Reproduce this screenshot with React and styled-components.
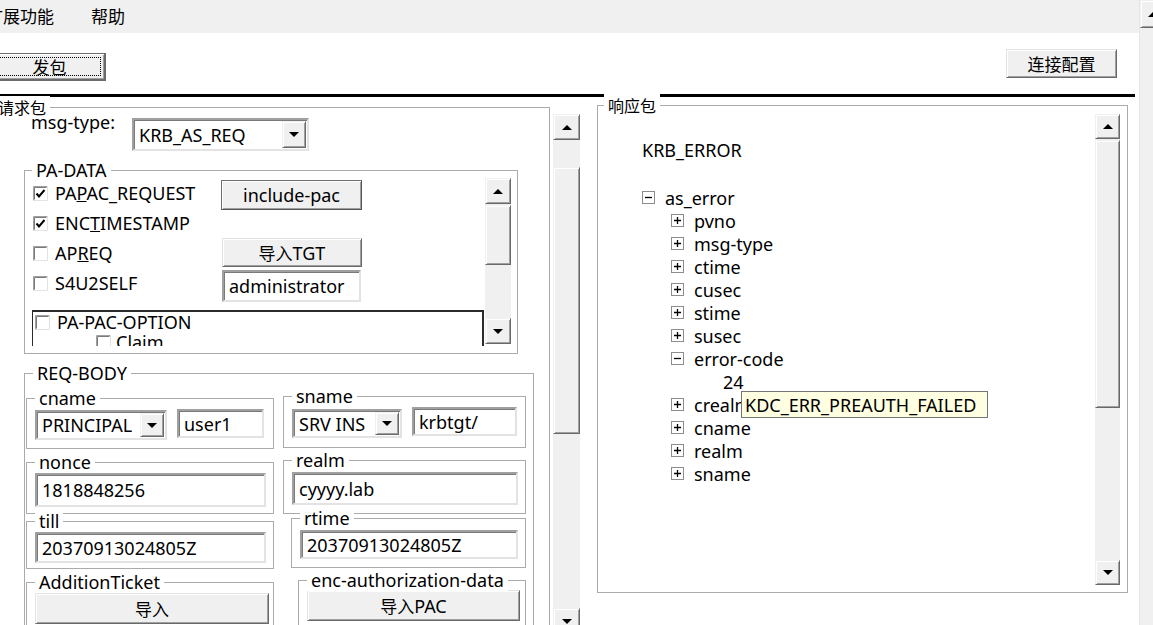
import React from "react";
import styled, { createGlobalStyle } from "styled-components";

const GlobalStyle = createGlobalStyle`
  html, body {
    margin: 0;
    padding: 0;
    background: #fff;
    overflow: hidden;
  }
  body {
    font-family: "Noto Sans", "Noto Sans CJK SC", sans-serif;
    font-size: 18px;
    color: #000;
  }
  * {
    box-sizing: border-box;
  }
`;

const Window = styled.div`
  width: 1153px;
  height: 625px;
  overflow: hidden;
  display: flex;
  background: #fff;
`;

const Main = styled.div`
  width: 1139px;
  flex: none;
  display: flex;
  flex-direction: column;
`;

const Cjk = styled.span`
  font-family: "Noto Sans CJK SC", sans-serif;
  font-size: ${(p) => p.$size || 17}px;
`;

/* menu + toolbar */
const MenuBar = styled.div`
  flex: none;
  height: 33px;
  background: #f0f0f0;
  display: flex;
  align-items: center;
  gap: 37px;
  padding-bottom: 2px;
`;

const MenuItem = styled.span`
  font-family: "Noto Sans CJK SC", sans-serif;
  font-size: 17px;
  &:first-child {
    margin-left: -14px;
  }
`;

const Toolbar = styled.div`
  flex: none;
  height: 61px;
  display: flex;
  justify-content: space-between;
  align-items: flex-start;
  padding-right: 22px;
`;

const Rule = styled.div`
  flex: none;
  height: 3px;
  background: #000;
  margin-right: 4px;
`;

const Btn = styled.button`
  flex: none;
  width: ${(p) => p.$w}px;
  height: ${(p) => p.$h}px;
  margin: ${(p) => p.$m || 0};
  padding: 0;
  font: inherit;
  color: #000;
  background: #f0f0f0;
  border: 1px solid;
  border-color: ${(p) =>
    p.$strong ? "#6e6e6e #555 #555 #6e6e6e" : "#e3e3e3 #696969 #696969 #e3e3e3"};
  box-shadow: inset 1px 1px 0 #fff, inset -1px -1px 0 #a0a0a0;
  display: flex;
  align-items: center;
  justify-content: center;
  line-height: 1;
  white-space: nowrap;
`;

const SendButton = styled(Btn)`
  border: 1px solid #6b6b6b;
  border-right-width: 2px;
  border-bottom-width: 2px;
  padding: 3px;
  align-items: stretch;
`;

const FocusRect = styled.span`
  flex: 1;
  border: 1px dotted #000;
  display: flex;
  align-items: center;
  justify-content: center;
`;

/* group boxes */
const Group = styled.div`
  position: relative;
  flex: none;
  width: ${(p) => p.$w}px;
  height: ${(p) => p.$h}px;
  margin: ${(p) => p.$m || 0};
  padding: ${(p) => p.$pad || 0};
  border: 1px solid #ababab;
  ${(p) => p.$open && "border-bottom: none;"}
  display: flex;
  flex-direction: ${(p) => (p.$row ? "row" : "column")};
  align-items: flex-start;
  gap: ${(p) => p.$gap || 0}px;
`;

const Legend = styled.span`
  position: absolute;
  top: -12px;
  left: ${(p) => (p.$left !== undefined ? p.$left : 8)}px;
  padding: 0 4px;
  background: #fff;
  line-height: 22px;
  white-space: nowrap;
`;

/* fields */
const Field = styled.div`
  flex: none;
  width: ${(p) => p.$w}px;
  height: ${(p) => p.$h}px;
  margin: ${(p) => p.$m || 0};
  background: #fff;
  border: 2px solid;
  border-color: #a0a0a0 #e3e3e3 #e3e3e3 #a0a0a0;
  box-shadow: inset 1px 1px 0 #7a7a7a;
  display: flex;
  align-items: center;
  padding-left: 5px;
  white-space: nowrap;
  overflow: hidden;
`;

const Combo = styled(Field)`
  justify-content: space-between;
  align-items: stretch;
  padding: 1px 1px 1px 5px;
`;

const ComboText = styled.span`
  display: flex;
  align-items: center;
  overflow: hidden;
`;

const DropBtn = styled.span`
  flex: none;
  width: 24px;
  background: #f0f0f0;
  border: 1px solid;
  border-color: #f0f0f0 #696969 #696969 #f0f0f0;
  box-shadow: inset 1px 1px 0 #fff, inset -1px -1px 0 #a0a0a0;
  display: flex;
  align-items: center;
  justify-content: center;
`;

const Arrow = styled.span`
  width: 0;
  height: 0;
  border-left: 5px solid transparent;
  border-right: 5px solid transparent;
  ${(p) => (p.$up ? "border-bottom: 5px solid #000;" : "border-top: 5px solid #000;")}
`;

/* scrollbars */
const Track = styled.div`
  flex: none;
  width: ${(p) => p.$w}px;
  height: ${(p) => p.$h}px;
  margin: ${(p) => p.$m || 0};
  background: #f0f0f0;
  display: flex;
  flex-direction: column;
`;

const ScrollBtn = styled.div`
  flex: none;
  height: ${(p) => p.$h}px;
  margin-top: ${(p) => p.$top || 0}px;
  background: #f0f0f0;
  border: 1px solid;
  border-color: #f0f0f0 #696969 #696969 #f0f0f0;
  box-shadow: inset 1px 1px 0 #fff, inset -1px -1px 0 #a0a0a0;
  display: flex;
  align-items: center;
  justify-content: center;
`;

const Fill = styled.div`
  flex: 1;
`;

const ScrollBar = ({ w, h, m, btn = 26, thumbTop, thumbLen }) => (
  <Track $w={w} $h={h} $m={m}>
    <ScrollBtn $h={btn}>
      <Arrow $up />
    </ScrollBtn>
    <ScrollBtn $h={thumbLen} $top={thumbTop} />
    <Fill />
    <ScrollBtn $h={btn}>
      <Arrow />
    </ScrollBtn>
  </Track>
);

const WinScroll = styled.div`
  flex: none;
  width: 26px;
  background: #f0f0f0;
  border-left: 1px solid #e6e6e6;
  display: flex;
  flex-direction: column;
`;

/* left panel */
const Body = styled.div`
  flex: 1;
  min-height: 0;
  display: flex;
  align-items: flex-start;
`;

const MsgRow = styled.div`
  display: flex;
  align-items: flex-start;
  margin: 10px 0 0 40px;
`;

const MsgLabel = styled.span`
  width: 101px;
  line-height: 22px;
  margin-top: -7px;
`;

const PaMain = styled.div`
  width: 452px;
  flex: none;
  display: flex;
  flex-direction: column;
`;

const PaTop = styled.div`
  display: grid;
  grid-template-columns: 189px 141px;
  align-items: start;
`;

const Col = styled.div`
  display: flex;
  flex-direction: column;
  align-items: flex-start;
  padding-left: ${(p) => p.$pl || 0}px;
  padding-top: ${(p) => p.$pt || 0}px;
  width: ${(p) => (p.$w ? `${p.$w}px` : "auto")};
  flex: none;
`;

const CheckRow = styled.div`
  flex: none;
  height: ${(p) => p.$h || 30}px;
  display: flex;
  align-items: center;
  gap: ${(p) => p.$gap || 7}px;
  margin-left: ${(p) => p.$indent || 0}px;
  white-space: nowrap;
  line-height: 22px;
`;

const OptionBox = styled.div`
  margin-top: 8px;
  width: 452px;
  height: 36px;
  border-top: 2px solid #2b2b2b;
  border-left: 1px solid #2b2b2b;
  border-right: 2px solid #2b2b2b;
  padding-left: 2px;
  overflow: hidden;
  display: flex;
  flex-direction: column;
`;

/* tree */
const TreeArea = styled.div`
  flex: 1;
  padding: 32px 0 0 44px;
  display: flex;
  flex-direction: column;
`;

const TreeRow = styled.div`
  position: relative;
  height: 23px;
  display: flex;
  align-items: center;
  gap: 10px;
  margin-left: ${(p) => p.$indent || 0}px;
  margin-top: ${(p) => p.$mt || 0}px;
  white-space: nowrap;
  line-height: 22px;
`;

const Tooltip = styled.div`
  position: absolute;
  left: 70px;
  top: -2px;
  width: 247px;
  height: 27px;
  background: #ffffe1;
  border: 1px solid #767676;
  padding-left: 3px;
  display: flex;
  align-items: center;
  z-index: 2;
`;

const Check = ({ checked }) => (
  <svg width="15" height="15" viewBox="0 0 15 15" style={{ flex: "none" }}>
    <rect x="0" y="0" width="15" height="15" fill="#fff" />
    <path d="M0.5 14.5V0.5H14.5" stroke="#a0a0a0" fill="none" />
    <path d="M1.5 13.5V1.5H13.5" stroke="#7a7a7a" fill="none" />
    <path d="M0.5 14.5H14.5V0.5" stroke="#e3e3e3" fill="none" />
    {checked && (
      <path d="M3.5 7.5L6 10.5L11.5 4" stroke="#000" strokeWidth="2" fill="none" />
    )}
  </svg>
);

const Toggle = ({ open }) => (
  <svg width="13" height="13" viewBox="0 0 13 13" style={{ flex: "none" }}>
    <rect x="0.5" y="0.5" width="12" height="12" fill="#fff" stroke="#8c8c8c" />
    <path d={open ? "M3 6.5H10" : "M3 6.5H10M6.5 3V10"} stroke="#000" strokeWidth="1.3" />
  </svg>
);

const treeItems = ["pvno", "msg-type", "ctime", "cusec", "stime", "susec"];
const treeTail = ["cname", "realm", "sname"];

export default function App() {
  return (
    <>
      <GlobalStyle />
      <Window>
        <Main>
          <MenuBar>
            <MenuItem>扩展功能</MenuItem>
            <MenuItem>帮助</MenuItem>
          </MenuBar>
          <Toolbar>
            <SendButton $w={112} $h={28} $m="20px 0 0 -6px">
              <FocusRect>
                <Cjk>发包</Cjk>
              </FocusRect>
            </SendButton>
            <Btn $w={111} $h={29} $m="16px 0 0 0">
              <Cjk>连接配置</Cjk>
            </Btn>
          </Toolbar>
          <Rule />
          <Body>
            <Group $w={560} $h={540} $m="10px 0 0 -10px" $open>
              <Legend $left={3}>
                <Cjk $size={16}>请求包</Cjk>
              </Legend>
              <MsgRow>
                <MsgLabel>msg-type:</MsgLabel>
                <Combo $w={177} $h={33}>
                  <ComboText>KRB_AS_REQ</ComboText>
                  <DropBtn>
                    <Arrow />
                  </DropBtn>
                </Combo>
              </MsgRow>

              <Group $w={494} $h={184} $m="19px 0 0 33px" $pad="7px 5px 0 7px" $row $gap={1}>
                <Legend $left={7}>PA-DATA</Legend>
                <PaMain>
                  <PaTop>
                    <Col $pl={1}>
                      <CheckRow>
                        <Check checked />
                        <span>
                          PA<u>P</u>AC_REQUEST
                        </span>
                      </CheckRow>
                      <CheckRow>
                        <Check checked />
                        <span>
                          ENC<u>T</u>IMESTAMP
                        </span>
                      </CheckRow>
                      <CheckRow>
                        <Check />
                        <span>
                          AP<u>R</u>EQ
                        </span>
                      </CheckRow>
                      <CheckRow>
                        <Check />
                        <span>S4U2SELF</span>
                      </CheckRow>
                    </Col>
                    <Col>
                      <Btn $w={141} $h={30} $m="2px 0 0 0" $strong>
                        include-pac
                      </Btn>
                      <Btn $w={140} $h={29} $m="28px 0 0 1px">
                        <Cjk>导入</Cjk>TGT
                      </Btn>
                      <Field $w={139} $h={32} $m="3px 0 0 1px">
                        administrator
                      </Field>
                    </Col>
                  </PaTop>
                  <OptionBox>
                    <CheckRow $h={20}>
                      <Check />
                      <span>PA-PAC-OPTION</span>
                    </CheckRow>
                    <CheckRow $h={20} $indent={61} $gap={5}>
                      <Check />
                      <span>Claim</span>
                    </CheckRow>
                  </OptionBox>
                </PaMain>
                <ScrollBar w={26} h={166} btn={26} thumbTop={1} thumbLen={60} />
              </Group>

              <Group $w={510} $h={280} $m="19px 0 0 33px" $open $row $gap={9}>
                <Legend $left={8}>REQ-BODY</Legend>
                <Col $w={249} $pt={24} $pl={1}>
                  <Group $w={248} $h={51} $pad="11px 0 0 8px" $row $gap={10}>
                    <Legend>cname</Legend>
                    <Combo $w={132} $h={30}>
                      <ComboText>PRINCIPAL</ComboText>
                      <DropBtn>
                        <Arrow />
                      </DropBtn>
                    </Combo>
                    <Field $w={87} $h={29} $m="-1px 0 0 0">
                      user1
                    </Field>
                  </Group>
                  <Group $w={248} $h={52} $m="13px 0 0 0" $pad="10px 0 0 8px">
                    <Legend>nonce</Legend>
                    <Field $w={231} $h={34}>
                      1818848256
                    </Field>
                  </Group>
                  <Group $w={248} $h={48} $m="7px 0 0 0" $pad="10px 0 0 8px">
                    <Legend>till</Legend>
                    <Field $w={231} $h={31}>
                      20370913024805Z
                    </Field>
                  </Group>
                  <Group $w={248} $h={60} $m="13px 0 0 0" $pad="10px 0 0 8px">
                    <Legend>AdditionTicket</Legend>
                    <Btn $w={234} $h={31}>
                      <Cjk>导入</Cjk>
                    </Btn>
                  </Group>
                </Col>
                <Col $w={243} $pt={22}>
                  <Group $w={243} $h={52} $pad="12px 0 0 8px" $row $gap={10}>
                    <Legend>sname</Legend>
                    <Combo $w={110} $h={29}>
                      <ComboText>SRV INS</ComboText>
                      <DropBtn>
                        <Arrow />
                      </DropBtn>
                    </Combo>
                    <Field $w={105} $h={29} $m="-2px 0 0 0">
                      krbtgt/
                    </Field>
                  </Group>
                  <Group $w={243} $h={54} $m="12px 0 0 0" $pad="11px 0 0 8px">
                    <Legend>realm</Legend>
                    <Field $w={226} $h={33}>
                      cyyyy.lab
                    </Field>
                  </Group>
                  <Group $w={235} $h={50} $m="4px 0 0 8px" $pad="11px 0 0 8px">
                    <Legend>rtime</Legend>
                    <Field $w={218} $h={29}>
                      20370913024805Z
                    </Field>
                  </Group>
                  <Group $w={228} $h={60} $m="12px 0 0 15px" $pad="9px 0 0 8px">
                    <Legend>enc-authorization-data</Legend>
                    <Btn $w={213} $h={31}>
                      <Cjk>导入</Cjk>PAC
                    </Btn>
                  </Group>
                </Col>
              </Group>
            </Group>

            <ScrollBar w={27} h={520} m="17px 0 0 3px" btn={26} thumbTop={27} thumbLen={267} />

            <Group $w={531} $h={488} $m="8px 0 0 17px" $row>
              <Legend $left={6}>
                <Cjk $size={16}>响应包</Cjk>
              </Legend>
              <TreeArea>
                <TreeRow>KRB_ERROR</TreeRow>
                <TreeRow $mt={25}>
                  <Toggle open />
                  <span>as_error</span>
                </TreeRow>
                {treeItems.map((t) => (
                  <TreeRow key={t} $indent={29}>
                    <Toggle />
                    <span>{t}</span>
                  </TreeRow>
                ))}
                <TreeRow $indent={29}>
                  <Toggle open />
                  <span>error-code</span>
                </TreeRow>
                <TreeRow $indent={81}>24</TreeRow>
                <TreeRow $indent={29}>
                  <Toggle />
                  <span>crealm</span>
                  <Tooltip>KDC_ERR_PREAUTH_FAILED</Tooltip>
                </TreeRow>
                {treeTail.map((t) => (
                  <TreeRow key={t} $indent={29}>
                    <Toggle />
                    <span>{t}</span>
                  </TreeRow>
                ))}
              </TreeArea>
              <ScrollBar w={25} h={471} m="8px 7px 0 0" btn={25} thumbTop={1} thumbLen={268} />
            </Group>
          </Body>
        </Main>
        <WinScroll>
          <ScrollBtn $h={28}>
            <Arrow $up />
          </ScrollBtn>
        </WinScroll>
      </Window>
    </>
  );
}
